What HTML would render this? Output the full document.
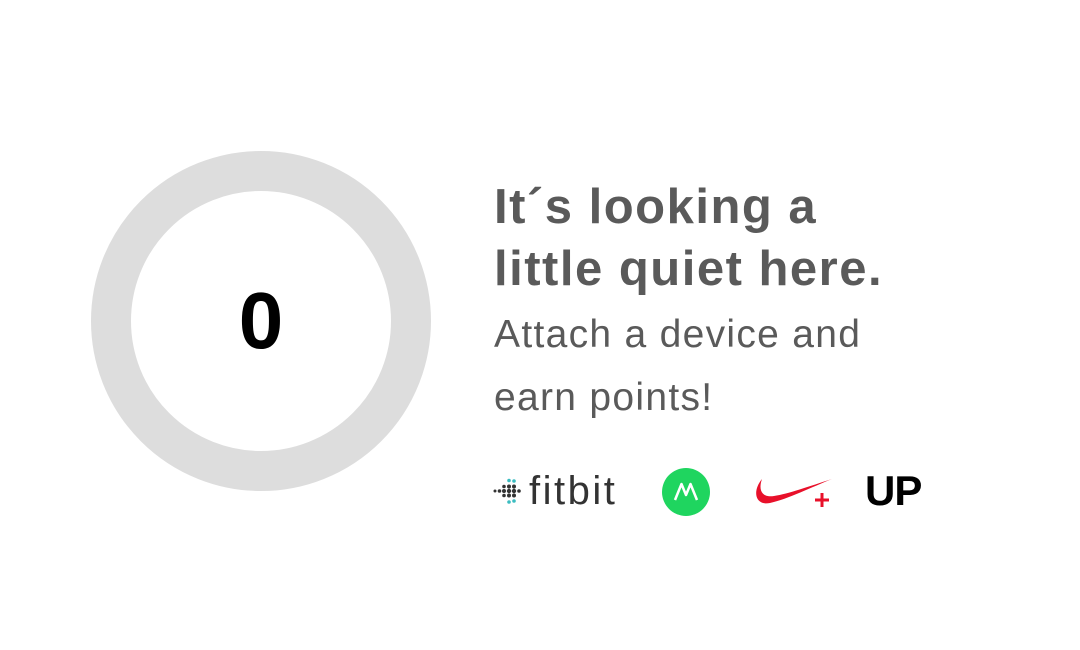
<!DOCTYPE html>
<html><head><style>
body{margin:0;width:1080px;height:650px;background:#fff;position:relative;overflow:hidden;font-family:"Liberation Sans",sans-serif}
.ring{position:absolute;left:91px;top:151px;width:260px;height:260px;border:40px solid #dddddd;border-radius:50%}
.zero{position:absolute;left:91px;top:151px;width:340px;height:340px;line-height:340px;text-align:center;font-size:80px;color:#000;font-weight:bold}
.h{position:absolute;left:494px;top:176px;font-size:49px;line-height:62px;color:#5a5a5a;font-weight:bold;letter-spacing:1.5px}
.s{position:absolute;left:494px;top:303px;font-size:39px;line-height:63px;color:#5a5a5a;letter-spacing:1.3px}
.ab{position:absolute}
</style></head><body>
<div class="ring"></div>
<div class="zero">0</div>
<div class="h">It´s looking a<br>little quiet here.</div>
<div class="s">Attach a device and<br>earn points!</div>
<svg class="ab" style="left:492px;top:476px" width="32" height="32">
<g fill="#333"><circle cx="3" cy="15" r="1.5"/><circle cx="7.5" cy="15" r="1.8"/><circle cx="12" cy="15" r="2"/><circle cx="12" cy="10.5" r="1.8"/><circle cx="12" cy="19.5" r="1.8"/><circle cx="17" cy="15" r="2.2"/><circle cx="17" cy="10.5" r="2"/><circle cx="17" cy="19.5" r="2"/><circle cx="22" cy="15" r="2.2"/><circle cx="22" cy="10.5" r="2"/><circle cx="22" cy="19.5" r="2"/><circle cx="27" cy="15" r="1.8"/></g>
<g fill="#3bbcc0"><circle cx="17" cy="4.5" r="1.8"/><circle cx="17" cy="26" r="1.8"/><circle cx="22" cy="5" r="1.8"/><circle cx="22" cy="25" r="1.8"/></g>
</svg>
<div class="ab" style="left:529px;top:469px;font-size:40px;color:#333;letter-spacing:2.5px">fitbit</div>
<svg class="ab" style="left:662px;top:468px" width="48" height="48"><circle cx="24" cy="24" r="24" fill="#1fd55f"/><path d="M13 32 L19.5 16 L24 27 L28.5 16 L35 32" fill="none" stroke="#fff" stroke-width="2.5" stroke-linejoin="round"/></svg>
<svg class="ab" style="left:752px;top:474px" width="84" height="36"><path d="M10 5 C0 17,3 32,18 29 C36 25,60 13,80 5 C58 12,36 20,22 22 C10 24,6 16,10 5Z" fill="#e8102a"/><path d="M70 19 V33 M63 26 H77" stroke="#e8102a" stroke-width="3"/></svg>
<div class="ab" style="left:865px;top:467px;font-size:42px;font-weight:bold;color:#000;letter-spacing:-1px">UP</div>
</body></html>
